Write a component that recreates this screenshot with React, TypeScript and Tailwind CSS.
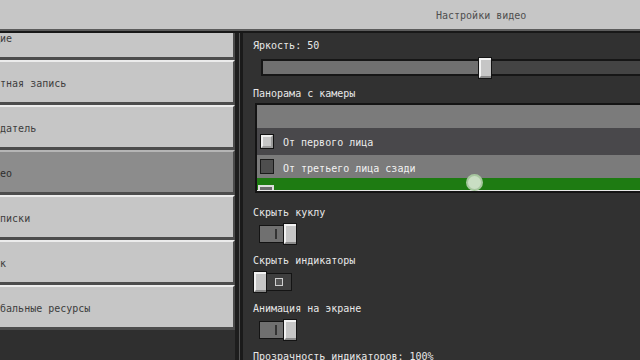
import React from "react";

const sideItems = [
  { label: "Общие", active: false },
  { label: "Учетная запись", active: false },
  { label: "Создатель", active: false },
  { label: "Видео", active: true },
  { label: "Подписки", active: false },
  { label: "Язык", active: false },
  { label: "Глобальные ресурсы", active: false },
];

function Toggle({ on }: { on: boolean }) {
  return (
    <div className="relative w-[45px] h-[22px]">
      <div
        className={
          "absolute left-[6px] top-[2px] w-[33px] h-[18px] border border-[#141414] " +
          (on ? "bg-[#707070]" : "bg-[#3e3e3e]")
        }
      >
        {on ? (
          <div className="absolute left-[15px] top-[3px] w-[2px] h-[10px] bg-[#333333]" />
        ) : (
          <div className="absolute left-[15px] top-[4px] w-[8px] h-[8px] border border-[#cfcfcf] bg-[#555555]" />
        )}
      </div>
      <div
        className={
          "absolute top-0 w-[14px] h-[22px] border border-[#141414] bg-[#c6c6c6] " +
          (on ? "left-[30px]" : "left-0")
        }
      >
        <div className="w-full h-full border-l-2 border-t-2 border-[#f2f2f2] border-b-2 border-b-[#8a8a8a]" />
      </div>
    </div>
  );
}

export default function App() {
  return (
    <div className="w-[640px] h-[360px] overflow-hidden bg-[#313131] flex flex-col font-['DejaVu_Sans_Mono',monospace] text-[10px] leading-[12px]">
      {/* header */}
      <div className="shrink-0 h-[29px] bg-[#c6c6c6] flex items-center pl-[436px] pt-[2px] text-[#4f4f4f]">
        Настройки видео
      </div>
      <div className="shrink-0 h-[2px] bg-[#5c5c5c]" />
      <div className="shrink-0 h-[2px] bg-[#181818]" />

      <div className="flex-1 flex min-h-0">
        {/* sidebar */}
        <div className="w-[235px] shrink-0 overflow-hidden bg-[#2f2f2f]">
          <div className="-mt-[18px] flex flex-col">
            {sideItems.map((it) => (
              <div
                key={it.label}
                className={
                  "h-[45px] shrink-0 flex items-center pt-[3px] overflow-hidden border-t-2 border-b-[3px] border-r-2 border-r-[#4a4a4a] border-b-[#4c4c4c] " +
                  (it.active
                    ? "bg-[#8c8c8c] border-t-[#b5b5b5] text-[#2e2e2e]"
                    : "bg-[#c6c6c6] border-t-[#ececec] text-[#3d3d3d]")
                }
              >
                <span className="-ml-[18px] whitespace-nowrap">{it.label}</span>
              </div>
            ))}
          </div>
        </div>

        {/* separator */}
        <div className="shrink-0 flex">
          <div className="w-[4px] bg-[#1d1d1d]" />
          <div className="w-[1px] bg-[#565656]" />
          <div className="w-[3px] bg-[#1a1a1a]" />
        </div>

        {/* main panel */}
        <div className="flex-1 relative overflow-hidden pl-[10px] pt-[7px] text-[#e8e8e8]">
          <div className="whitespace-nowrap">Яркость: 50</div>

          {/* slider */}
          <div className="relative ml-[8px] mt-[5px] h-[22px] w-[420px]">
            <div className="absolute left-0 top-[2px] w-[420px] h-[17px] border-2 border-[#161616] flex">
              <div className="w-[215px] h-full bg-[#707070]" />
              <div className="flex-1 h-full bg-[#444444]" />
            </div>
            <div className="absolute left-[217px] top-0 w-[14px] h-[22px] border border-[#141414] bg-[#c6c6c6]">
              <div className="w-full h-full border-l-2 border-t-2 border-[#f3f3f3] border-b-2 border-b-[#8a8a8a]" />
            </div>
          </div>

          <div className="mt-[9px] whitespace-nowrap">Панорама с камеры</div>

          {/* dropdown */}
          <div className="mt-[3px] ml-[2px] w-[420px] border-2 border-[#141414] flex flex-col">
            <div className="h-[23px] bg-[#7b7b7b]" />
            <div className="h-[27px] bg-[#49484b] flex items-center pl-[3px] gap-[9px]">
              <div className="w-[14px] h-[15px] border border-[#111111] bg-[#c6c6c6]">
                <div className="w-full h-full border-2 border-[#efefef] border-b-[#9a9a9a] border-r-[#9a9a9a]" />
              </div>
              <span className="whitespace-nowrap text-[#ececec] pt-[3px]">От первого лица</span>
            </div>
            <div className="h-[23px] bg-[#7b7b7b] flex items-center pl-[3px] gap-[9px]">
              <div className="w-[14px] h-[15px] border border-[#1a1a1a] bg-[#4e4e4e]" />
              <span className="whitespace-nowrap text-[#f2f2f2] pt-[5px]">От третьего лица сзади</span>
            </div>
            <div className="relative h-[12px] bg-[#1e7b12] overflow-hidden">
              <div className="absolute left-[1px] top-[7px] w-[16px] h-[8px] border-2 border-[#dedede] bg-[#6b6b6b]" />
            </div>
            <div className="h-[1px] bg-[#e8e8e8]" />
          </div>

          <div className="mt-[14px] whitespace-nowrap">Скрыть куклу</div>
          <div className="mt-[4px]">
            <Toggle on={true} />
          </div>

          <div className="mt-[10px] whitespace-nowrap">Скрыть индикаторы</div>
          <div className="mt-[4px]">
            <Toggle on={false} />
          </div>

          <div className="mt-[10px] whitespace-nowrap">Анимация на экране</div>
          <div className="mt-[4px]">
            <Toggle on={true} />
          </div>

          <div className="mt-[10px] whitespace-nowrap">Прозрачность индикаторов: 100%</div>

          {/* touch indicator */}
          <div className="absolute left-[223px] top-[141px] w-[17px] h-[17px] rounded-full bg-[#c9dec3] border-2 border-[#a7c79f]" />
        </div>
      </div>
    </div>
  );
}
